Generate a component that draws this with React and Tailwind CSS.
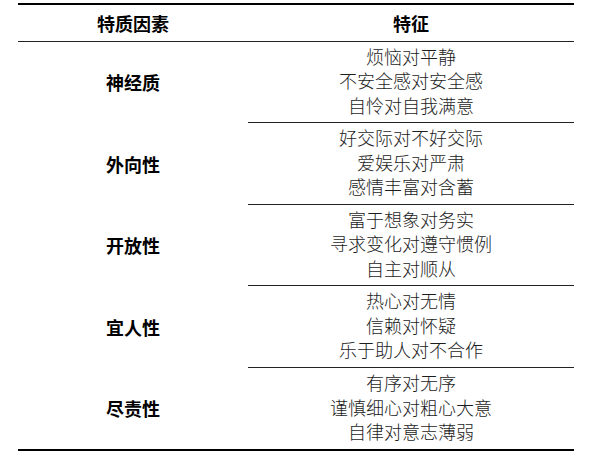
import React from 'react';

const rows = [
    { factor: '神经质', traits: ['烦恼对平静', '不安全感对安全感', '自怜对自我满意'], h: 'h-[81px]' },
    { factor: '外向性', traits: ['好交际对不好交际', '爱娱乐对严肃', '感情丰富对含蓄'], h: 'h-[82px]' },
    { factor: '开放性', traits: ['富于想象对务实', '寻求变化对遵守惯例', '自主对顺从'], h: 'h-[81px]' },
    { factor: '宜人性', traits: ['热心对无情', '信赖对怀疑', '乐于助人对不合作'], h: 'h-[82px]' },
    { factor: '尽责性', traits: ['有序对无序', '谨慎细心对粗心大意', '自律对意志薄弱'], h: 'h-[81px]' },
];

const font = { fontFamily: '"Noto Sans CJK SC", sans-serif' };

const App = () => {
    return (
        <div className="w-[594px] h-[458px] bg-white pt-[3px]" style={font}>
            <div className="ml-[18px] w-[556px] border-t-2 border-b-2 border-black">
                {/* header */}
                <div className="grid grid-cols-[230px_326px] h-[37px] border-b border-[#222] font-bold text-[18px] text-black">
                    <div className="flex items-center justify-center">特质因素</div>
                    <div className="flex items-center justify-center">特征</div>
                </div>

                {rows.map((row, i) => (
                    <div key={row.factor} className={`grid grid-cols-[230px_326px] ${row.h}`}>
                        <div className="flex items-center justify-center font-bold text-[18px] text-black">
                            {row.factor}
                        </div>
                        <div
                            className={`flex flex-col items-center justify-center pb-[3px] text-[18px] leading-[24.5px] font-light text-[#1c1c1c] ${
                                i < rows.length - 1 ? 'border-b border-[#222]' : ''
                            }`}
                        >
                            {row.traits.map((t) => (
                                <span key={t}>{t}</span>
                            ))}
                        </div>
                    </div>
                ))}
            </div>
        </div>
    );
};

export default App;
